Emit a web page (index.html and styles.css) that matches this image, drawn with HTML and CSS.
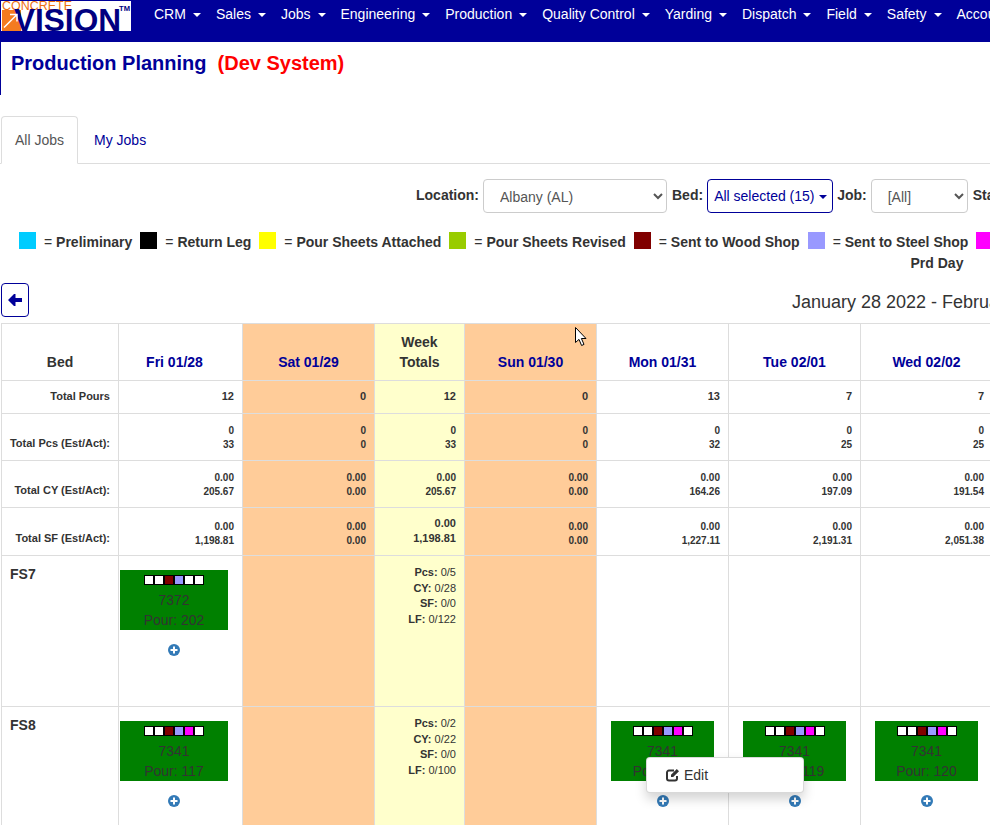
FILE: index.html
```html
<!DOCTYPE html>
<html lang="en">
<head>
<meta charset="utf-8">
<title>Production Planning</title>
<link rel="stylesheet" href="styles.css">
</head>
<body>
<div class="page">
  <header class="navbar">
    <a class="logo" href="#">
      <svg width="130" height="31" viewBox="0 0 130 31">
        <rect x="0" y="1" width="130" height="30" fill="#fff"/>
        <rect x="1" y="10" width="19" height="21" fill="#f47b20"/>
        <text x="1" y="9.5" class="logo-top" textLength="70" lengthAdjust="spacingAndGlyphs">CONCRETE</text>
        <text x="13" y="31" class="logo-main" textLength="107" lengthAdjust="spacingAndGlyphs">VISION</text>
        <text x="118" y="10.5" class="logo-tm" textLength="11" lengthAdjust="spacingAndGlyphs">TM</text>
        <path d="M3 27.5 L15.5 15 M9 14.5 H16 V21.5" fill="none" stroke="#fff" stroke-width="1.5"/>
      </svg>
    </a>
    <nav class="nav">
      <a class="nav-item" href="#">CRM<span class="caret"></span></a>
      <a class="nav-item" href="#">Sales<span class="caret"></span></a>
      <a class="nav-item" href="#">Jobs<span class="caret"></span></a>
      <a class="nav-item" href="#">Engineering<span class="caret"></span></a>
      <a class="nav-item" href="#">Production<span class="caret"></span></a>
      <a class="nav-item" href="#">Quality Control<span class="caret"></span></a>
      <a class="nav-item" href="#">Yarding<span class="caret"></span></a>
      <a class="nav-item" href="#">Dispatch<span class="caret"></span></a>
      <a class="nav-item" href="#">Field<span class="caret"></span></a>
      <a class="nav-item" href="#">Safety<span class="caret"></span></a>
      <a class="nav-item" href="#">Accounting<span class="caret"></span></a>
    </nav>
  </header>

  <div class="title-block">
    <h1 class="title">Production Planning<span class="dev">(Dev System)</span></h1>
  </div>

  <div class="tabs">
    <a class="tab tab-active" href="#">All Jobs</a>
    <a class="tab" href="#">My Jobs</a>
  </div>

  <form class="filters">
    <label class="filter-label">Location:</label>
    <select class="control control-location"><option>Albany (AL)</option></select>
    <label class="filter-label">Bed:</label>
    <button type="button" class="multi">All selected (15)<span class="multi-caret"></span></button>
    <label class="filter-label">Job:</label>
    <select class="control control-job"><option>[All]</option></select>
    <label class="filter-label">Status:</label>
  </form>

  <div class="legend">
    <div class="legend-row">
      <span class="legend-item"><i class="swatch c-prelim"></i><span>= <b>Preliminary</b></span></span>
      <span class="legend-item"><i class="swatch c-return"></i><span>= <b>Return Leg</b></span></span>
      <span class="legend-item"><i class="swatch c-attached"></i><span>= <b>Pour Sheets Attached</b></span></span>
      <span class="legend-item"><i class="swatch c-revised"></i><span>= <b>Pour Sheets Revised</b></span></span>
      <span class="legend-item"><i class="swatch c-wood"></i><span>= <b>Sent to Wood Shop</b></span></span>
      <span class="legend-item"><i class="swatch c-steel"></i><span>= <b>Sent to Steel Shop</b></span></span>
      <span class="legend-item"><i class="swatch c-prd"></i></span>
    </div>
    <div class="legend-wrap"><b>Prd Day</b></div>
  </div>

  <div class="date-row">
    <button type="button" class="back">
      <svg width="14" height="12" viewBox="0 0 14 12"><path d="M0 6 L6 0 H7.5 V4 H14 V8 H7.5 V12 H6 Z" fill="#000099"/></svg>
    </button>
    <div class="date-range">January 28 2022 - February 03 2022</div>
  </div>

  <table class="plan">
    <colgroup>
      <col class="col-bed"><col class="col-fri"><col class="col-day"><col class="col-week"><col class="col-day"><col class="col-day"><col class="col-day"><col class="col-day">
    </colgroup>
    <thead>
      <tr>
        <th class="head">Bed</th>
        <th class="head date head-fri">Fri 01/28</th>
        <th class="head date off">Sat 01/29</th>
        <th class="head week">Week<br>Totals</th>
        <th class="head date off">Sun 01/30</th>
        <th class="head date">Mon 01/31</th>
        <th class="head date">Tue 02/01</th>
        <th class="head date">Wed 02/02</th>
      </tr>
    </thead>
    <tbody>
      <tr class="row-pours">
        <td class="label">Total Pours</td>
        <td class="num strong">12</td><td class="num strong off">0</td><td class="num strong week">12</td><td class="num strong off">0</td><td class="num strong">13</td><td class="num strong">7</td><td class="num strong">7</td>
      </tr>
      <tr class="row-total">
        <td class="label">Total Pcs (Est/Act):</td>
        <td class="num">0<br>33</td><td class="num off">0<br>0</td><td class="num week">0<br>33</td><td class="num off">0<br>0</td><td class="num">0<br>32</td><td class="num">0<br>25</td><td class="num">0<br>25</td>
      </tr>
      <tr class="row-total">
        <td class="label">Total CY (Est/Act):</td>
        <td class="num">0.00<br>205.67</td><td class="num off">0.00<br>0.00</td><td class="num week">0.00<br>205.67</td><td class="num off">0.00<br>0.00</td><td class="num">0.00<br>164.26</td><td class="num">0.00<br>197.09</td><td class="num">0.00<br>191.54</td>
      </tr>
      <tr class="row-total">
        <td class="label">Total SF (Est/Act):</td>
        <td class="num">0.00<br>1,198.81</td><td class="num off">0.00<br>0.00</td><td class="num strong week">0.00<br>1,198.81</td><td class="num off">0.00<br>0.00</td><td class="num">0.00<br>1,227.11</td><td class="num">0.00<br>2,191.31</td><td class="num">0.00<br>2,051.38</td>
      </tr>
      <tr class="row-bed">
        <td class="bed">FS7</td>
        <td class="slot slot-fri">
          <div class="pour">
            <div class="strip"><i class="box"></i><i class="box"></i><i class="box c-wood"></i><i class="box c-steel"></i><i class="box"></i><i class="box"></i></div>
            <div>7372</div><div>Pour: 202</div>
          </div>
          <svg class="add" width="12" height="12" viewBox="0 0 12 12"><circle cx="6" cy="6" r="6" fill="#337ab7"/><path d="M5 2.5h2V5h2.5v2H7v2.5H5V7H2.5V5H5z" fill="#fff"/></svg>
        </td>
        <td class="off"></td>
        <td class="tally week"><b>Pcs:</b> 0/5<br><b>CY:</b> 0/28<br><b>SF:</b> 0/0<br><b>LF:</b> 0/122</td>
        <td class="off"></td>
        <td></td><td></td><td></td>
      </tr>
      <tr class="row-bed">
        <td class="bed">FS8</td>
        <td class="slot slot-fri">
          <div class="pour">
            <div class="strip"><i class="box"></i><i class="box"></i><i class="box c-wood"></i><i class="box c-steel"></i><i class="box c-prd"></i><i class="box"></i></div>
            <div>7341</div><div>Pour: 117</div>
          </div>
          <svg class="add" width="12" height="12" viewBox="0 0 12 12"><circle cx="6" cy="6" r="6" fill="#337ab7"/><path d="M5 2.5h2V5h2.5v2H7v2.5H5V7H2.5V5H5z" fill="#fff"/></svg>
        </td>
        <td class="off"></td>
        <td class="tally week"><b>Pcs:</b> 0/2<br><b>CY:</b> 0/22<br><b>SF:</b> 0/0<br><b>LF:</b> 0/100</td>
        <td class="off"></td>
        <td class="slot">
          <div class="pour">
            <div class="strip"><i class="box"></i><i class="box"></i><i class="box c-wood"></i><i class="box c-steel"></i><i class="box c-prd"></i><i class="box"></i></div>
            <div>7341</div><div>Pour: 118</div>
          </div>
          <svg class="add" width="12" height="12" viewBox="0 0 12 12"><circle cx="6" cy="6" r="6" fill="#337ab7"/><path d="M5 2.5h2V5h2.5v2H7v2.5H5V7H2.5V5H5z" fill="#fff"/></svg>
        </td>
        <td class="slot">
          <div class="pour">
            <div class="strip"><i class="box"></i><i class="box"></i><i class="box c-wood"></i><i class="box c-steel"></i><i class="box c-prd"></i><i class="box"></i></div>
            <div>7341</div><div>Pour: 119</div>
          </div>
          <svg class="add" width="12" height="12" viewBox="0 0 12 12"><circle cx="6" cy="6" r="6" fill="#337ab7"/><path d="M5 2.5h2V5h2.5v2H7v2.5H5V7H2.5V5H5z" fill="#fff"/></svg>
        </td>
        <td class="slot">
          <div class="pour">
            <div class="strip"><i class="box"></i><i class="box"></i><i class="box c-wood"></i><i class="box c-steel"></i><i class="box c-prd"></i><i class="box"></i></div>
            <div>7341</div><div>Pour: 120</div>
          </div>
          <svg class="add" width="12" height="12" viewBox="0 0 12 12"><circle cx="6" cy="6" r="6" fill="#337ab7"/><path d="M5 2.5h2V5h2.5v2H7v2.5H5V7H2.5V5H5z" fill="#fff"/></svg>
        </td>
      </tr>
    </tbody>
  </table>

  <div class="context-menu">
    <svg class="edit-icon" width="14" height="14" viewBox="0 0 14 14">
      <path d="M11 8V10.5A2 2 0 0 1 9 12.5H3A2 2 0 0 1 1 10.5V4.5A2 2 0 0 1 3 2.5H8" fill="none" stroke="#333" stroke-width="2"/>
      <path d="M5 6.8 L10.8 1 L13 3.2 L7.2 9 H5 Z" fill="#333"/>
    </svg>
    <span class="edit-label">Edit</span>
  </div>

  <svg class="cursor" width="13" height="20" viewBox="0 0 13 20"><path d="M.5.5V15.5L4 12.4 6.6 18.5 9 17.4 6.4 11.5H11Z" fill="#fff" stroke="#000" stroke-width="1"/></svg>
</div>
</body>
</html>
```

FILE: styles.css
```css
* { box-sizing: border-box; }
html, body { margin: 0; padding: 0; height: 825px; overflow: hidden; background: #fff; }
body { font-family: "Liberation Sans", Arial, sans-serif; font-size: 14px; line-height: 1.42857; color: #333; }
a { text-decoration: none; }
.page { position: relative; width: 1874px; height: 825px; overflow: hidden; }

.navbar { display: flex; align-items: flex-start; height: 42px; background: #000099; padding-left: 1px; }
.logo { display: block; width: 130px; height: 31px; flex: none; }
.logo svg { display: block; }
.logo-top { font-size: 12.5px; fill: #ee7011; font-family: "Liberation Sans", sans-serif; }
.logo-main { font-size: 31px; font-weight: 700; fill: #000080; font-family: "Liberation Sans", sans-serif; }
.logo-tm { font-size: 7.7px; font-weight: 700; fill: #000080; font-family: "Liberation Sans", sans-serif; }
.nav { display: flex; margin-left: 23px; padding-top: 5px; }
.nav-item { color: #fff; margin-right: 15px; white-space: nowrap; }
.caret { display: inline-block; margin-left: 7px; vertical-align: middle; border-top: 4px solid #fff; border-left: 4px solid transparent; border-right: 4px solid transparent; }

.title-block { height: 53px; border-left: 1px solid #000099; padding: 9px 0 0 10px; }
.title { margin: 0; font-size: 20px; line-height: 24px; font-weight: 700; color: #000099; }
.dev { color: #ff0000; margin-left: 11px; }

.tabs { display: flex; margin: 21px 0 0 0; padding-left: 1px; border-bottom: 1px solid #ddd; height: 48px; }
.tab { height: 48px; padding: 14px 14px 12px; border: 1px solid transparent; border-radius: 4px 4px 0 0; color: #000099; margin-right: 1px; }
.tab-active { color: #555; background: #fff; border-color: #ddd #ddd #fff; padding: 14px 13px 12px; }

.filters { display: flex; align-items: center; margin: 15px 0 0; padding-left: 416px; height: 34px; }
.filter-label { font-weight: 700; margin: 0 4px 0 0; }
.control { height: 34px; padding: 7px 12px 5px; font: 14px/1.42857 "Liberation Sans", Arial, sans-serif; color: #555; background: #fff; border: 1px solid #ccc; border-radius: 4px; margin-right: 5px; }
.control-location { width: 184px; }
.control-job { width: 97px; }
.multi { display: flex; align-items: center; width: 126px; height: 34px; padding: 1px 6px 0; margin-right: 4px; font: 14px/1.42857 "Liberation Sans", Arial, sans-serif; color: #000099; background: #fff; border: 1px solid #000099; border-radius: 4px; white-space: nowrap; }
.multi-caret { margin-left: 4px; border-top: 4px solid #000099; border-left: 4px solid transparent; border-right: 4px solid transparent; }

.legend { margin-top: 19px; }
.legend-row { display: flex; gap: 8px; padding-left: 19px; height: 22px; }
.legend-item { display: inline-flex; align-items: flex-start; gap: 8px; white-space: nowrap; }
.legend-item > span { position: relative; top: 1px; }
.swatch { display: block; width: 17px; height: 17px; }
.legend-wrap { text-align: center; height: 20px; }
.c-prelim { background: #00ccff; }
.c-return { background: #000; }
.c-attached { background: #ffff00; }
.c-revised { background: #99cc00; }
.c-wood { background: #800000; }
.c-steel { background: #9999ff; }
.c-prd { background: #ff00ff; }

.date-row { position: relative; height: 34px; margin-top: 9px; padding-left: 1px; display: flex; }
.back { display: flex; align-items: center; justify-content: flex-start; width: 28px; height: 34px; padding: 0 0 0 6px; background: #fff; border: 1px solid #000099; border-radius: 4px; }
.date-range { position: absolute; left: 2px; right: 0; top: 6px; text-align: center; font-size: 18px; line-height: 26px; color: #333; }

.plan { margin: 6px 0 0 1px; border-collapse: collapse; table-layout: fixed; width: 992px; font-size: 11px; }
.plan th, .plan td { border: 1px solid #ddd; padding: 8px; vertical-align: bottom; }
.col-bed { width: 117px; }
.col-fri { width: 124px; }
.col-day { width: 132px; }
.col-week { width: 90px; }
.plan .head { padding: 9px 8px 7px; font-size: 14px; text-align: center; font-weight: 700; color: #333; }
.plan .date { color: #000099; }
.plan .head-fri { padding-right: 20px; }
.plan .off { background: #ffcc99; }
.plan .week { background: #ffffcc; }
.plan .label { padding-left: 0; font-weight: 700; text-align: right; white-space: nowrap; }
.num { text-align: right; font-size: 10px; font-weight: 700; }
.plan .num { padding: 9px 8px 7px; }
.strong { font-size: 11px; }
.plan .strong { padding: 8px; }
.row-total { height: 47px; }
.plan .bed { vertical-align: top; padding-top: 9px; font-size: 14px; font-weight: 700; }
.plan .tally { vertical-align: top; padding-top: 9px; text-align: right; font-size: 11px; }
.row-bed { height: 151px; }
.plan .slot { vertical-align: top; padding: 14px 0 0; text-align: center; }
.plan .slot-fri { padding-left: 1px; text-align: left; }
.pour { width: 103px; height: 60px; margin: 0 auto; padding-top: 5px; background: #008000; color: #333; font-size: 14px; line-height: 20px; text-align: center; }
.slot-fri .pour { width: 108px; margin: 0; }
.strip { display: flex; justify-content: center; margin-bottom: 5px; height: 10px; }
.box { display: block; width: 10px; height: 10px; background: #fff; border: 1px solid #000; }
.box.c-wood { background: #800000; }
.box.c-steel { background: #9999ff; }
.box.c-prd { background: #ff00ff; }
.add { display: block; margin: 14px auto 0; }
.slot-fri .add { margin-left: 48px; }

.context-menu { position: absolute; left: 646px; top: 757px; width: 158px; height: 36px; display: flex; align-items: center; gap: 4px; padding-left: 19px; background: #fff; border: 1px solid rgba(0,0,0,.15); border-radius: 4px; box-shadow: 0 6px 12px rgba(0,0,0,.175); color: #333; }
.edit-icon { flex: none; }
.edit-label { padding-top: 2px; }
.cursor { position: absolute; left: 575px; top: 327px; }
```
